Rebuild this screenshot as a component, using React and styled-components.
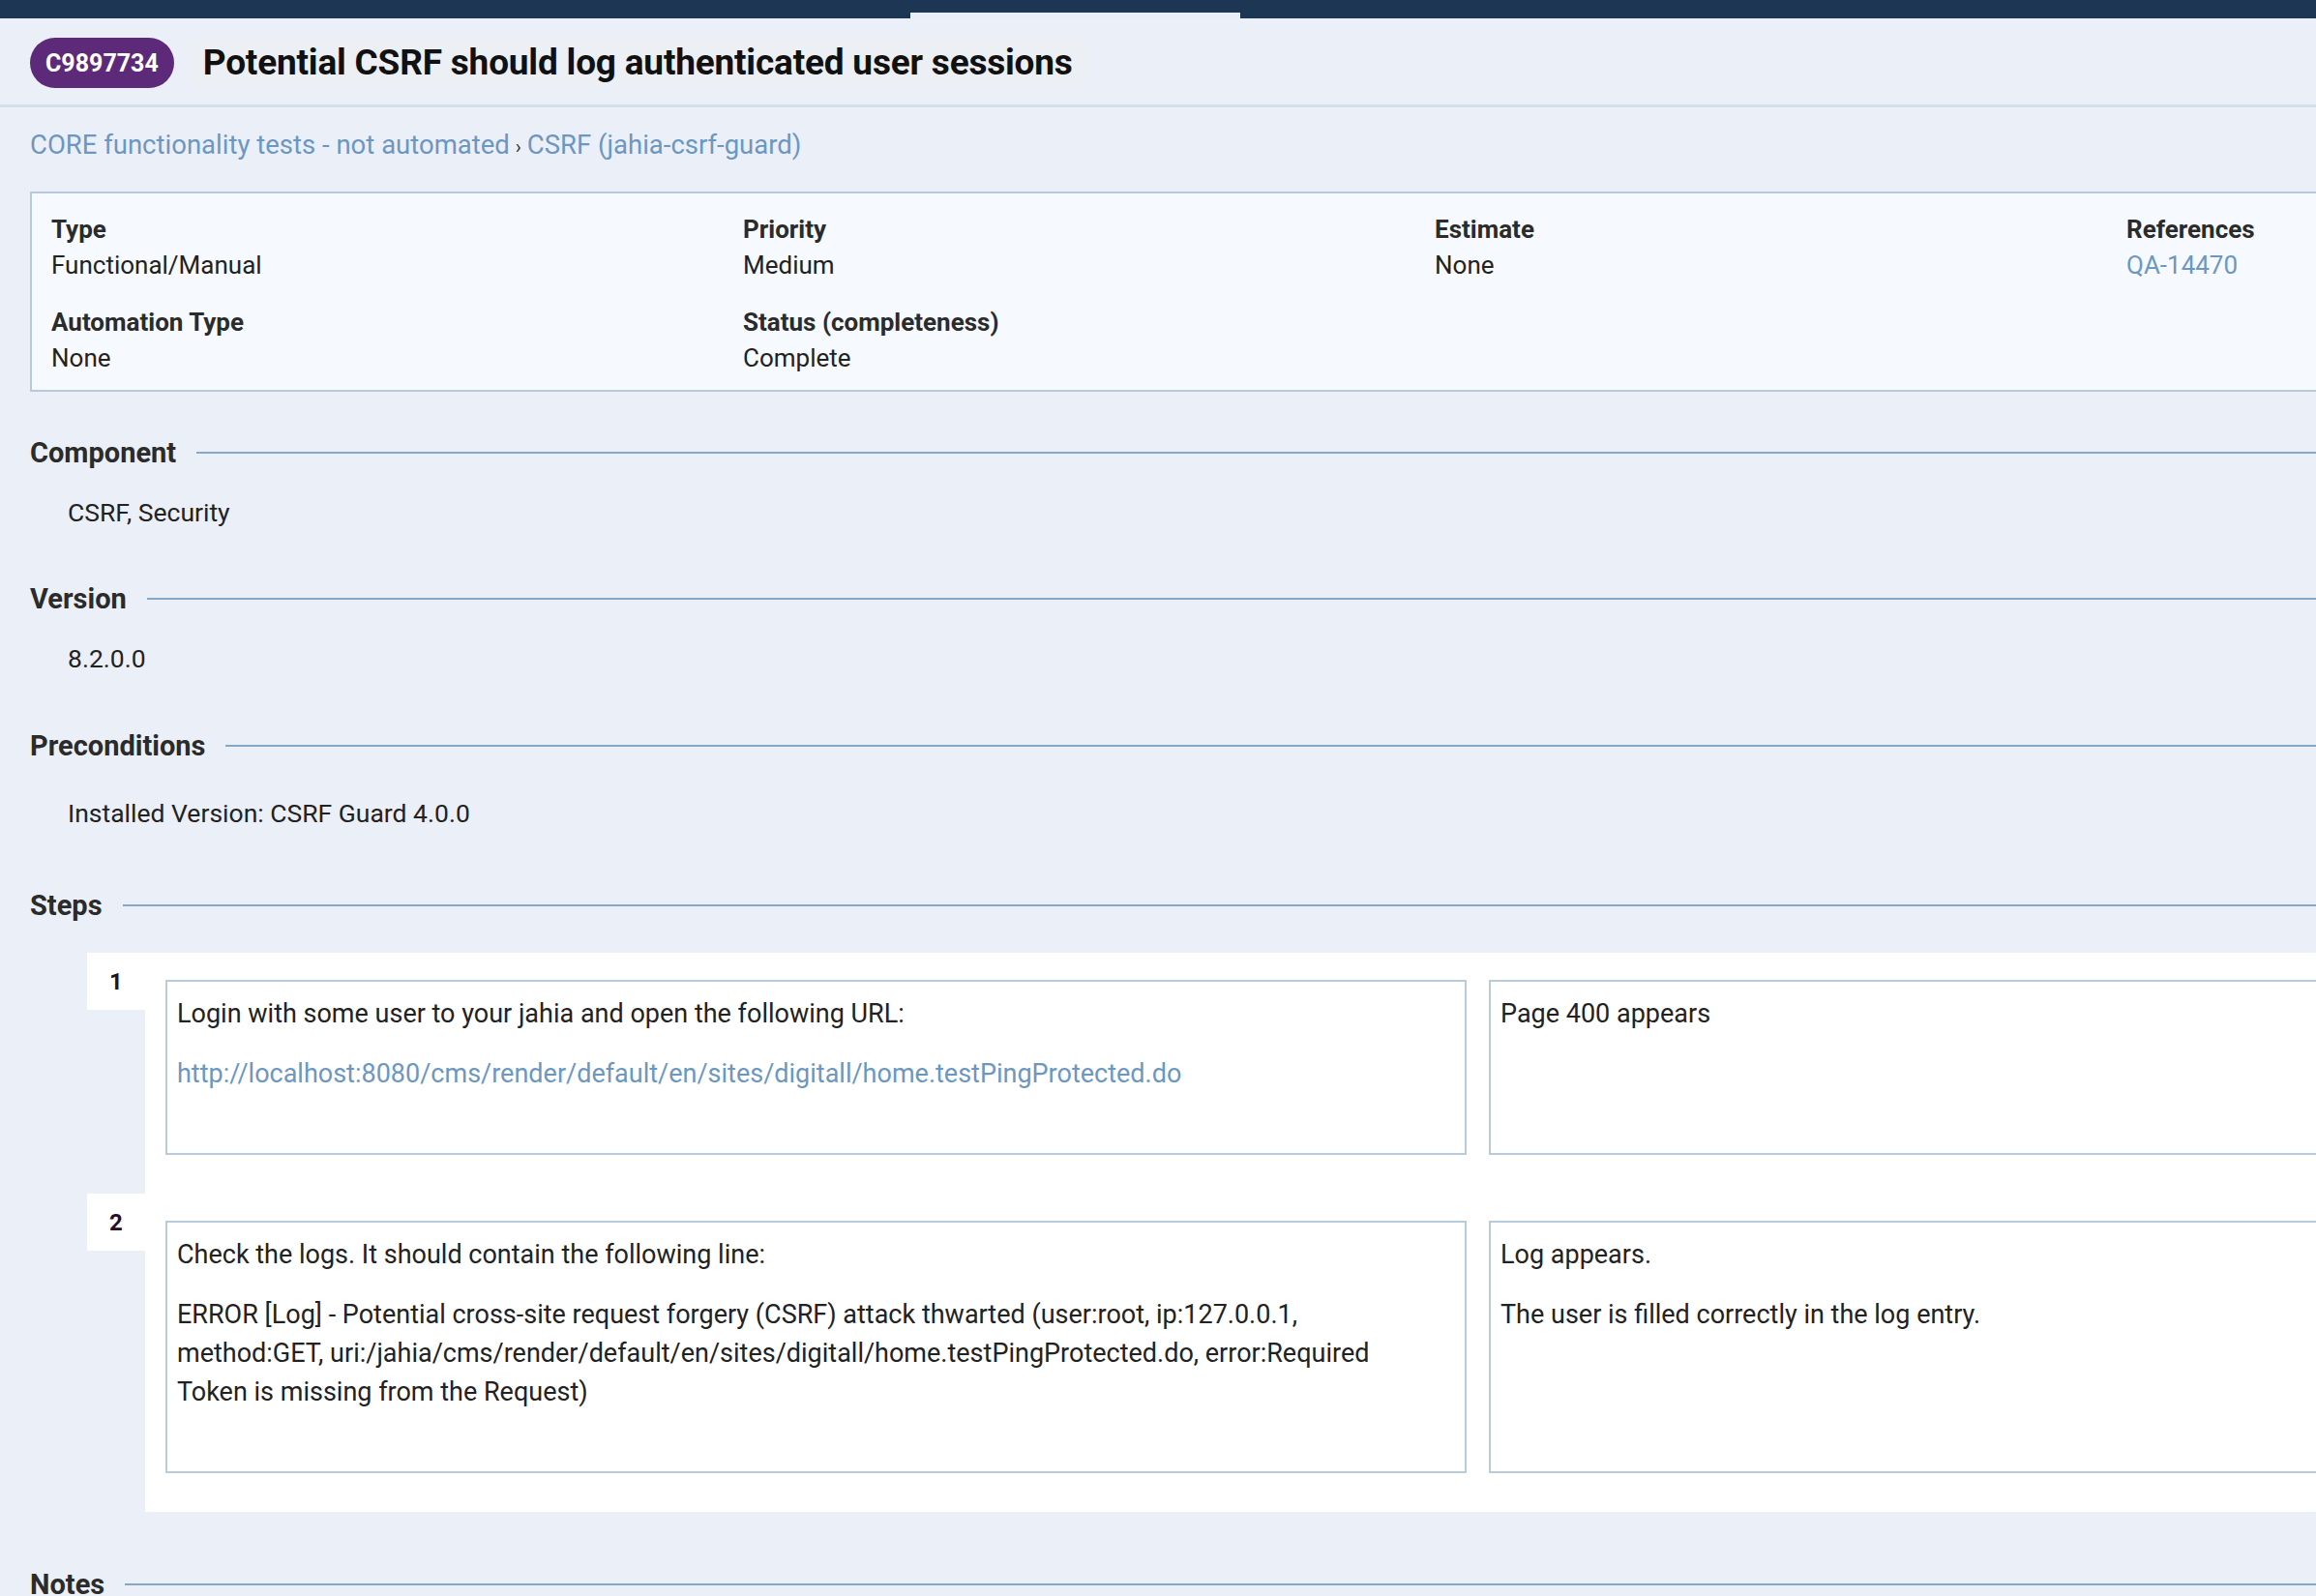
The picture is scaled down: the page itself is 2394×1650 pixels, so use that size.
import React from "react";
import styled, { createGlobalStyle } from "styled-components";

const GlobalStyle = createGlobalStyle`
  html, body {
    margin: 0;
    padding: 0;
    background: #ebf0f8;
    overflow: hidden;
  }
  body {
    font-family: Roboto, "Noto Sans", Arial, sans-serif;
    color: #222;
  }
`;

const Page = styled.div`
  width: 2960px;
  min-height: 1650px;
`;

const TopBar = styled.div`
  height: 19px;
  background: #1c3654;
  display: flex;
  align-items: flex-end;
`;

const ActiveTab = styled.div`
  margin-left: 941px;
  width: 341px;
  height: 6px;
  background: #eaeff7;
`;

const Header = styled.div`
  display: flex;
  align-items: center;
  gap: 18px;
  padding: 20px 31px 17px;
  border-bottom: 3px solid #d4dfea;
`;

const Badge = styled.span`
  display: inline-flex;
  align-items: center;
  height: 52px;
  padding: 0 16px;
  border-radius: 26px;
  background: #5d2a79;
  color: #fff;
  font-size: 25px;
  font-weight: 700;
`;

const Title = styled.h1`
  margin: 0;
  padding: 0 14px 0 12px;
  height: 50px;
  line-height: 50px;
  background: #eceff4;
  font-size: 37px;
  font-weight: 700;
  letter-spacing: -0.2px;
  color: #111;
`;

const Main = styled.div`
  padding: 0 31px;
`;

const Breadcrumb = styled.div`
  margin-top: 21px;
  font-size: 27.5px;
  line-height: 36px;
  color: #6c97c1;
`;

const Crumb = styled.span`
  color: #6c97c1;
`;

const Sep = styled.span`
  color: #333;
  font-size: 20px;
  margin: 0 6px;
`;

const InfoBox = styled.div`
  margin-top: 28px;
  border: 2px solid #b5cadc;
  background: #f6f9fd;
  padding: 19px 20px 14px;
  display: grid;
  grid-template-columns: repeat(4, 715px);
  row-gap: 22px;
`;

const Field = styled.div`
  font-size: 26px;
  line-height: 37px;
`;

const Label = styled.div`
  font-weight: 700;
  color: #2b2b2b;
`;

const Value = styled.div`
  color: ${(p) => (p.$link ? "#6c97c1" : "#222")};
`;

const Section = styled.section`
  margin-top: ${(p) => p.$top || 53}px;
`;

const SectionHead = styled.div`
  display: flex;
  align-items: center;
  gap: 21px;
  font-size: 29px;
  line-height: 36px;
  font-weight: 700;
  color: #2b2b2b;

  &::after {
    content: "";
    flex: 1;
    height: 2px;
    background: #86a7c6;
  }
`;

const SectionBody = styled.div`
  margin-top: ${(p) => p.$gap || 26}px;
  padding-left: 39px;
  font-size: 26.5px;
  line-height: 36px;
  color: #222;
`;

const StepList = styled.div`
  margin-top: 31px;
  margin-left: 59px;
`;

const StepRow = styled.div`
  display: grid;
  grid-template-columns: 60px 1fr;
`;

const StepNum = styled.div`
  height: 59px;
  background: #fff;
  display: flex;
  align-items: center;
  justify-content: center;
  font-size: 24px;
  font-weight: 700;
  color: #241027;
`;

const StepBody = styled.div`
  background: #fff;
  padding: 28px 0 40px 21px;
  display: flex;
  gap: 23px;
`;

const StepBox = styled.div`
  width: 1345px;
  box-sizing: border-box;
  border: 2px solid #b7cbdd;
  padding: 13px 10px 62px;
  font-size: 27px;
  line-height: 40px;
  color: #222;

  p {
    margin: 0;
  }
  p + p {
    margin-top: 22px;
  }
`;

const Link = styled.span`
  color: #6c97c1;
`;

const fields = [
  { label: "Type", value: "Functional/Manual" },
  { label: "Priority", value: "Medium" },
  { label: "Estimate", value: "None" },
  { label: "References", value: "QA-14470", link: true },
  { label: "Automation Type", value: "None" },
  { label: "Status (completeness)", value: "Complete" },
];

const App = () => {
  return (
    <Page>
      <GlobalStyle />
      <TopBar>
        <ActiveTab />
      </TopBar>

      <Header>
        <Badge>C9897734</Badge>
        <Title>Potential CSRF should log authenticated user sessions</Title>
      </Header>

      <Main>
        <Breadcrumb>
          <Crumb>CORE functionality tests - not automated</Crumb>
          <Sep>›</Sep>
          <Crumb>CSRF (jahia-csrf-guard)</Crumb>
        </Breadcrumb>

        <InfoBox>
          {fields.map((f) => (
            <Field key={f.label}>
              <Label>{f.label}</Label>
              <Value $link={f.link}>{f.value}</Value>
            </Field>
          ))}
        </InfoBox>

        <Section $top={45}>
          <SectionHead>Component</SectionHead>
          <SectionBody>CSRF, Security</SectionBody>
        </Section>

        <Section>
          <SectionHead>Version</SectionHead>
          <SectionBody>8.2.0.0</SectionBody>
        </Section>

        <Section $top={54}>
          <SectionHead>Preconditions</SectionHead>
          <SectionBody $gap={34}>Installed Version: CSRF Guard 4.0.0</SectionBody>
        </Section>

        <Section $top={59}>
          <SectionHead>Steps</SectionHead>
          <StepList>
            <StepRow>
              <StepNum>1</StepNum>
              <StepBody>
                <StepBox>
                  <p>Login with some user to your jahia and open the following URL:</p>
                  <p>
                    <Link>http://localhost:8080/cms/render/default/en/sites/digitall/home.testPingProtected.do</Link>
                  </p>
                </StepBox>
                <StepBox>
                  <p>Page 400 appears</p>
                </StepBox>
              </StepBody>
            </StepRow>
            <StepRow>
              <StepNum>2</StepNum>
              <StepBody>
                <StepBox>
                  <p>Check the logs. It should contain the following line:</p>
                  <p>
                    ERROR [Log] - Potential cross-site request forgery (CSRF) attack thwarted (user:root, ip:127.0.0.1,
                    <br />
                    method:GET, uri:/jahia/cms/render/default/en/sites/digitall/home.testPingProtected.do, error:Required
                    <br />
                    Token is missing from the Request)
                  </p>
                </StepBox>
                <StepBox>
                  <p>Log appears.</p>
                  <p>The user is filled correctly in the log entry.</p>
                </StepBox>
              </StepBody>
            </StepRow>
          </StepList>
        </Section>

        <Section $top={57}>
          <SectionHead>Notes</SectionHead>
        </Section>
      </Main>
    </Page>
  );
};

export default App;
